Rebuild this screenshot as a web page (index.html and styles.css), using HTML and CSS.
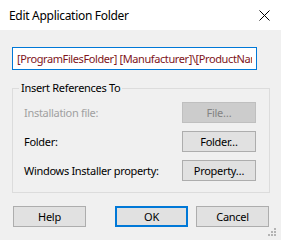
FILE: index.html
```html
<!DOCTYPE html>
<html>
<head>
  <meta charset="utf-8">
  <link rel="stylesheet" href="styles.css">
</head>
<body>
<div class="dialog">
  <div class="titlebar">
    <span class="title">Edit Application Folder</span>
    <svg class="close" width="11" height="11" viewBox="0 0 11 11">
      <path d="M0.5 0.5 L10.5 10.5 M10.5 0.5 L0.5 10.5" stroke="#000" stroke-width="1" fill="none"/>
    </svg>
  </div>
  <div class="content">
    <input class="path" type="text" value="[ProgramFilesFolder] [Manufacturer]\[ProductName]">
    <fieldset class="group">
      <legend>Insert References To</legend>
      <div class="row">
        <span class="label disabled">Installation file:</span>
        <button class="btn" disabled>File…</button>
      </div>
      <div class="row">
        <span class="label">Folder:</span>
        <button class="btn">Folder…</button>
      </div>
      <div class="row">
        <span class="label">Windows Installer property:</span>
        <button class="btn">Property…</button>
      </div>
    </fieldset>
    <div class="footer">
      <button class="btn">Help</button>
      <button class="btn default">OK</button>
      <button class="btn">Cancel</button>
    </div>
  </div>
  <svg class="grip" width="9" height="9" viewBox="0 0 9 9">
    <rect x="6" y="0" width="2" height="2" fill="#b4b4b4"/>
    <rect x="3" y="3" width="2" height="2" fill="#b4b4b4"/>
    <rect x="6" y="3" width="2" height="2" fill="#b4b4b4"/>
    <rect x="0" y="6" width="2" height="2" fill="#b4b4b4"/>
    <rect x="3" y="6" width="2" height="2" fill="#b4b4b4"/>
    <rect x="6" y="6" width="2" height="2" fill="#b4b4b4"/>
  </svg>
</div>
</body>
</html>
```

FILE: styles.css
```css
body, html {
  margin: 0;
  height: 100%;
}

body {
  font-family: "Noto Sans", sans-serif;
  font-size: 11px;
  letter-spacing: -0.3px;
  color: #000;
  background: #f0f0f0;
}

.dialog {
  position: relative;
  width: 281px;
  height: 240px;
  background: #f0f0f0;
}

.titlebar {
  display: flex;
  align-items: center;
  justify-content: space-between;
  height: 30px;
  padding: 0 11px 0 9px;
  background: #fff;
}

.title {
  font-size: 12px;
  letter-spacing: -0.3px;
  margin-top: 1px;
}

.close {
  display: block;
}

.content {
  display: flex;
  flex-direction: column;
  padding: 17px 0 0 12px;
}

.path {
  box-sizing: border-box;
  width: 245px;
  height: 23px;
  margin: 0;
  padding: 0 4px;
  border: 1px solid #0078d7;
  outline: none;
  background: #fff;
  color: #7e1420;
  font-family: "Noto Sans", sans-serif;
  font-size: 11px;
  letter-spacing: -0.4px;
}

.group {
  box-sizing: border-box;
  width: 258px;
  margin: 11px 0 0 0;
  padding: 7px 13px 11px 6px;
  border: 1px solid #dcdcdc;
}

.group legend {
  padding: 0 2px;
  line-height: 14px;
}

.row {
  display: flex;
  align-items: center;
  justify-content: space-between;
  padding-left: 5px;
}

.row + .row {
  margin-top: 8px;
}

.label.disabled {
  color: #a0a0a0;
}

.btn {
  box-sizing: border-box;
  width: 74px;
  height: 21px;
  margin: 0;
  padding: 0;
  border: 1px solid #adadad;
  background: #e1e1e1;
  color: #000;
  font-family: "Noto Sans", sans-serif;
  font-size: 11px;
  letter-spacing: -0.3px;
}

.btn:disabled {
  background: #cccccc;
  border-color: #bfbfbf;
  color: #838383;
}

.btn.default {
  border: 2px solid #0078d7;
}

.footer {
  display: flex;
  gap: 8px;
  margin-top: 13px;
  padding-left: 1px;
}

.footer .btn {
  width: 73px;
}

.footer .btn.default {
  margin-left: 21px;
}

.grip {
  position: absolute;
  right: 4px;
  bottom: 3px;
}
```
